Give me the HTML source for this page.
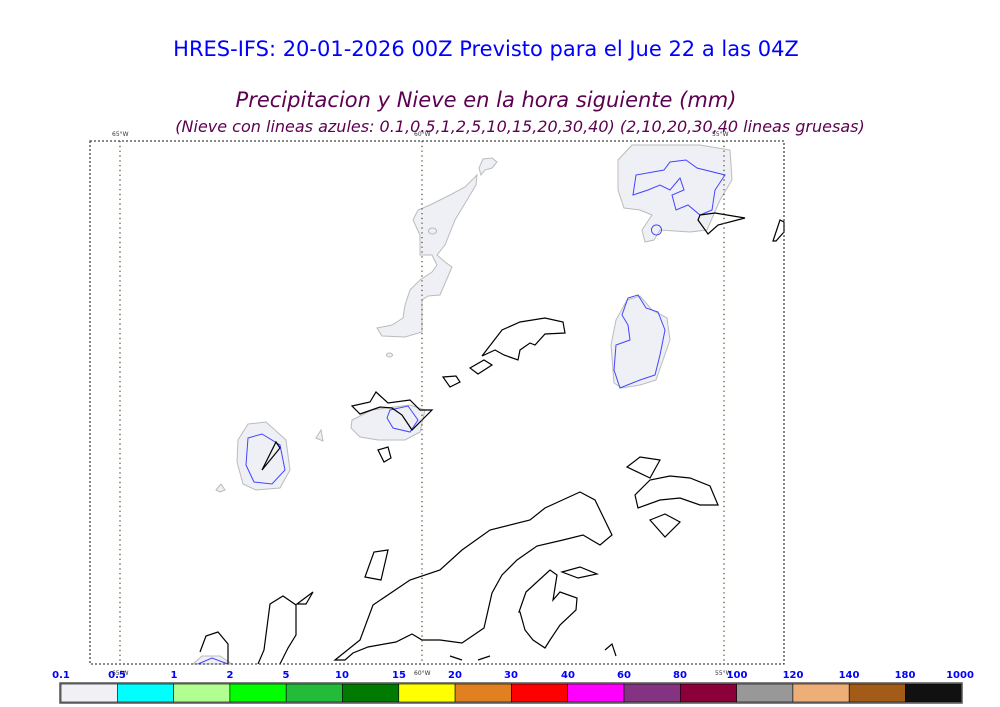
<!DOCTYPE html>
<html><head><style>
body{margin:0;background:#fff;width:1000px;height:707px;overflow:hidden;font-family:"DejaVu Sans","Liberation Sans",sans-serif}
</style></head><body>
<svg width="1000" height="707" xmlns="http://www.w3.org/2000/svg" style="position:absolute;left:0;top:0">
<text x="486" y="56" text-anchor="middle" font-size="21" fill="#0000ff" font-family="DejaVu Sans, sans-serif">HRES-IFS: 20-01-2026 00Z Previsto para el Jue 22 a las 04Z</text>
<text x="486" y="107" text-anchor="middle" font-size="21" fill="#5c0050" font-style="italic" font-family="DejaVu Sans, sans-serif">Precipitacion y Nieve en la hora siguiente (mm)</text>
<text x="520" y="132" text-anchor="middle" font-size="16" fill="#5c0050" font-style="italic" font-family="DejaVu Sans, sans-serif">(Nieve con lineas azules: 0.1,0.5,1,2,5,10,15,20,30,40)  (2,10,20,30,40 lineas gruesas)</text>
<g font-size="6" fill="#333"><text x="112" y="136">65°W</text><text x="414" y="136">60°W</text><text x="712" y="136">55°W</text>
<text x="112" y="675">65°W</text><text x="414" y="675">60°W</text><text x="715" y="675">55°W</text></g>
<g fill="#eef0f6" stroke="#bbbbbb" stroke-width="1">
<path d="M481,175 L479,168 L483,159 L492,158 L497,162 L492,168 L485,170 Z"/>
<path d="M477,175 L465,187 L450,195 L430,205 L418,210 L413,220 L420,235 L420,255 L432,255 L437,265 L432,272 L420,280 L410,290 L405,305 L403,318 L392,325 L377,328 L382,336 L405,337 L422,332 L422,300 L428,296 L440,295 L452,267 L445,262 L437,255 L445,245 L455,220 L467,200 L476,185 Z"/>
<path d="M432,228 a4,3 0 1 0 1,0 Z"/>
<path d="M389,353 a3,2 0 1 0 1,0 Z"/>
<path d="M618,160 L632,145 L700,145 L730,150 L732,180 L720,200 L707,230 L690,232 L660,230 L654,240 L645,242 L642,230 L652,215 L640,210 L624,208 L618,190 Z"/>
<path d="M627,300 L640,296 L652,310 L667,318 L670,340 L663,360 L656,380 L640,385 L622,388 L614,383 L611,345 L616,320 Z"/>
<path d="M238,440 L248,424 L266,422 L286,440 L290,470 L280,488 L256,490 L243,484 L237,462 Z"/>
<path d="M352,420 L372,410 L410,405 L425,410 L420,432 L405,440 L378,440 L360,437 L351,428 Z"/>
<path d="M316,438 L321,430 L323,441 Z"/>
<path d="M216,490 L221,484 L225,490 L220,492 Z"/>
<path d="M193,664 L202,656 L220,656 L232,664 Z"/>
</g>
<g fill="none" stroke="#4444ff" stroke-width="1">
<path d="M633,195 L636,175 L664,170 L670,162 L686,160 L697,168 L725,175 L715,190 L712,210 L700,215 L688,205 L676,210 L672,195 L684,190 L680,178 L670,190 L660,185 L648,190 Z"/>
<path d="M656,225 a5,5 0 1 0 1,0 Z"/>
<path d="M628,298 L638,295 L646,308 L658,312 L665,330 L660,355 L655,375 L640,380 L620,388 L614,370 L616,345 L630,340 L628,325 L622,315 Z"/>
<path d="M248,438 L262,434 L280,445 L285,470 L272,484 L254,482 L246,465 Z"/>
<path d="M390,410 L408,406 L418,420 L410,432 L393,428 L387,418 Z"/>
<path d="M198,664 L212,658 L228,664"/>
</g>
<g fill="none" stroke="#000" stroke-width="1.2">
<path d="M482,356 L502,330 L520,322 L545,318 L563,322 L565,333 L545,334 L535,345 L530,343 L520,350 L518,360 L504,355 L495,350 Z"/>
<path d="M470,368 L484,360 L492,365 L478,374 Z"/>
<path d="M443,377 L456,376 L460,382 L450,387 Z"/>
<path d="M352,406 L370,402 L376,392 L388,403 L410,400 L420,410 L432,410 L412,430 L402,415 L392,408 L380,407 L360,414 Z"/>
<path d="M262,470 L276,442 L280,448 Z"/>
<path d="M378,450 L388,447 L391,458 L384,462 Z"/>
<path d="M627,467 L640,457 L660,460 L650,478 Z"/>
<path d="M635,495 L650,480 L670,476 L690,478 L710,486 L718,505 L700,505 L680,498 L660,500 L638,508 Z"/>
<path d="M650,520 L665,514 L680,522 L665,537 Z"/>
<path d="M335,660 L360,640 L373,605 L410,580 L440,570 L462,550 L490,530 L530,520 L545,508 L580,492 L595,500 L612,535 L600,545 L583,535 L563,540 L537,546 L517,560 L502,575 L492,593 L484,628 L462,643 L440,640 L422,640 L412,634 L396,642 L379,645 L368,647 L353,653 L345,660 Z"/>
<path d="M519,612 L526,592 L550,570 L557,575 L553,600 L560,592 L577,598 L576,610 L560,625 L550,640 L545,648 L533,640 L525,630 L520,612 Z"/>
<path d="M562,572 L580,567 L597,574 L578,578 Z"/>
<path d="M365,577 L374,552 L388,550 L381,580 Z"/>
<path d="M297,604 L313,592 L306,604 Z"/>
<path d="M258,664 L264,650 L270,604 L283,596 L296,605 L296,635 L288,648 L280,664"/>
<path d="M200,652 L206,636 L218,632 L228,644 L228,664"/>
<path d="M605,650 L612,644 L616,656"/>
<path d="M700,215 L715,213 L745,218 L718,225 L708,234 L698,220 Z"/>
<path d="M773,241 L780,220 L784,222 L784,232 L776,241 Z"/>
<path d="M450,656 L462,660"/>
<path d="M478,660 L490,656"/>
</g>
<g stroke="#6b5030" stroke-width="1.3" stroke-dasharray="1.3,3.5">
<line x1="120" y1="141" x2="120" y2="664"/><line x1="422" y1="141" x2="422" y2="664"/><line x1="724" y1="141" x2="724" y2="664"/>
</g>
<rect x="90" y="141" width="694" height="523" fill="none" stroke="#444" stroke-width="1.3" stroke-dasharray="2,2"/>
<g stroke="#000" stroke-width="0.6">
<rect x="61" y="684" width="56.3" height="18" fill="#f0f0f5"/>
<rect x="117.3" y="684" width="56.3" height="18" fill="#00ffff"/>
<rect x="173.6" y="684" width="56.3" height="18" fill="#b0ff90"/>
<rect x="229.9" y="684" width="56.3" height="18" fill="#00ff00"/>
<rect x="286.2" y="684" width="56.3" height="18" fill="#22bb3a"/>
<rect x="342.5" y="684" width="56.3" height="18" fill="#007a00"/>
<rect x="398.8" y="684" width="56.3" height="18" fill="#ffff00"/>
<rect x="455.1" y="684" width="56.3" height="18" fill="#e08020"/>
<rect x="511.4" y="684" width="56.3" height="18" fill="#ff0000"/>
<rect x="567.7" y="684" width="56.3" height="18" fill="#ff00ff"/>
<rect x="624" y="684" width="56.3" height="18" fill="#843282"/>
<rect x="680.3" y="684" width="56.3" height="18" fill="#8b0038"/>
<rect x="736.6" y="684" width="56.3" height="18" fill="#989898"/>
<rect x="792.9" y="684" width="56.3" height="18" fill="#eeae78"/>
<rect x="849.2" y="684" width="56.3" height="18" fill="#a25c18"/>
<rect x="905.5" y="684" width="56.3" height="18" fill="#111111"/>
</g>
<rect x="60" y="683" width="902" height="20" fill="none" stroke="#555" stroke-width="1.5"/>
<g font-size="10" font-weight="bold" fill="#0000ff" text-anchor="middle">
<text x="61" y="678">0.1</text><text x="117" y="678">0.5</text><text x="174" y="678">1</text><text x="230" y="678">2</text><text x="286" y="678">5</text><text x="342" y="678">10</text><text x="399" y="678">15</text><text x="455" y="678">20</text><text x="511" y="678">30</text><text x="568" y="678">40</text><text x="624" y="678">60</text><text x="680" y="678">80</text><text x="737" y="678">100</text><text x="793" y="678">120</text><text x="849" y="678">140</text><text x="905" y="678">180</text><text x="960" y="678">1000</text>
</g>
</svg>
</body></html>
